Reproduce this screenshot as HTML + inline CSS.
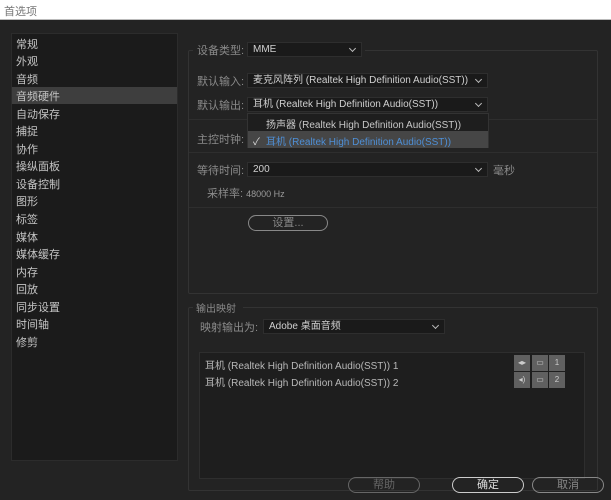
<!DOCTYPE html><html><head><meta charset="utf-8"><style>
*{margin:0;padding:0;box-sizing:border-box}
body{width:611px;height:500px;background:#232323;font-family:"Liberation Sans","Noto Sans CJK SC",sans-serif;font-size:10px;color:#a8a8a8;position:relative;overflow:hidden}
.a{position:absolute;white-space:nowrap}
.title{left:0;top:0;width:611px;height:20px;background:#fff;color:#777;font-size:11px;padding:3px 4px;border-bottom:1px solid #bbb}
.list{left:11px;top:33px;width:167px;height:428px;background:#1b1b1b;border:1px solid #2c2c2c}
.li{position:absolute;left:4px;font-size:11px;color:#c4c4c4}
.sel{position:absolute;left:0;width:165px;height:17px;background:#3e3e3e}
.dd{position:absolute;background:#1a1a1a;border:1px solid #2e2e2e;height:15px;color:#d0d0d0;padding:0 5px;line-height:13px;font-size:10px}
.dd:after{content:"";position:absolute;right:6px;top:3px;width:4px;height:4px;border-right:1px solid #bbb;border-bottom:1px solid #bbb;transform:rotate(45deg)}
.lbl{font-size:11px;color:#8a8a8a}
.box{border:1px solid #333;border-radius:2px}
.btn{position:absolute;height:16px;border:1px solid #666;border-radius:8px;color:#666;text-align:center;font-size:11px;line-height:14px}
.ic{position:absolute;width:16px;height:16px;background:#606060;color:#ccc;font-size:8px;text-align:center;line-height:16px}
</style></head><body>
<div class="a title">首选项</div>
<div class="a list">
<div class="sel" style="top:53px"></div>
<div class="li" style="top:2px">常规</div><div class="li" style="top:19px">外观</div><div class="li" style="top:37px">音频</div><div class="li" style="top:54px">音频硬件</div><div class="li" style="top:72px">自动保存</div><div class="li" style="top:89px">捕捉</div><div class="li" style="top:107px">协作</div><div class="li" style="top:124px">操纵面板</div><div class="li" style="top:142px">设备控制</div><div class="li" style="top:159px">图形</div><div class="li" style="top:177px">标签</div><div class="li" style="top:195px">媒体</div><div class="li" style="top:212px">媒体缓存</div><div class="li" style="top:230px">内存</div><div class="li" style="top:247px">回放</div><div class="li" style="top:265px">同步设置</div><div class="li" style="top:282px">时间轴</div><div class="li" style="top:300px">修剪</div>
</div>
<div class="a box" style="left:188px;top:50px;width:410px;height:244px"></div>
<div class="a" style="left:193px;top:42px;width:172px;height:16px;background:#232323"></div>
<div class="a" style="left:189px;top:119px;width:408px;height:1px;background:#2e2e2e"></div>
<div class="a" style="left:189px;top:152px;width:408px;height:1px;background:#2e2e2e"></div>
<div class="a" style="left:189px;top:207px;width:408px;height:1px;background:#2e2e2e"></div>
<div class="a lbl" style="left:197px;top:42px">设备类型:</div>
<div class="dd" style="left:247px;top:42px;width:115px">MME</div>
<div class="a lbl" style="left:197px;top:73px">默认输入:</div>
<div class="dd" style="left:247px;top:73px;width:241px">麦克风阵列 (Realtek High Definition Audio(SST))</div>
<div class="a lbl" style="left:197px;top:97px">默认输出:</div>
<div class="dd" style="left:247px;top:97px;width:241px">耳机 (Realtek High Definition Audio(SST))</div>
<div class="a lbl" style="left:197px;top:131px">主控时钟:</div>
<div class="a" style="left:247px;top:113px;width:242px;height:35px;background:#1e1e1e;border:1px solid #333">
<div class="a" style="left:18px;top:2px;color:#c8c8c8">扬声器 (Realtek High Definition Audio(SST))</div>
<div class="a" style="left:0;top:17px;width:240px;height:17px;background:#464646"></div>
<div class="a" style="left:5px;top:19px;color:#ddd">✓</div>
<div class="a" style="left:18px;top:19px;color:#4e8fd6">耳机 (Realtek High Definition Audio(SST))</div>
</div>
<div class="a lbl" style="left:197px;top:162px">等待时间:</div>
<div class="dd" style="left:247px;top:162px;width:241px">200</div>
<div class="a lbl" style="left:493px;top:162px">毫秒</div>
<div class="a lbl" style="left:207px;top:185px">采样率: <span style="font-size:9px;color:#999">48000 Hz</span></div>
<div class="btn" style="left:248px;top:215px;width:80px;color:#888;border-color:#888">设置...</div>
<div class="a box" style="left:188px;top:307px;width:410px;height:184px"></div>
<div class="a" style="left:193px;top:300px;width:50px;height:14px;background:#232323"></div>
<div class="a lbl" style="left:196px;top:300px;font-size:10px">输出映射</div>
<div class="a lbl" style="left:200px;top:319px">映射输出为:</div>
<div class="dd" style="left:263px;top:319px;width:182px">Adobe 桌面音频</div>
<div class="a" style="left:199px;top:352px;width:386px;height:127px;background:#1e1e1e;border:1px solid #2e2e2e"></div>
<div class="a" style="left:205px;top:357px;color:#b8b8b8">耳机 (Realtek High Definition Audio(SST)) 1</div>
<div class="a" style="left:205px;top:374px;color:#b8b8b8">耳机 (Realtek High Definition Audio(SST)) 2</div>
<div class="ic" style="left:514px;top:355px">◂▸</div><div class="ic" style="left:532px;top:355px">▭</div><div class="ic" style="left:549px;top:355px">1</div>
<div class="ic" style="left:514px;top:372px">◂)</div><div class="ic" style="left:532px;top:372px">▭</div><div class="ic" style="left:549px;top:372px">2</div>
<div class="btn" style="left:348px;top:477px;width:72px">帮助</div>
<div class="btn" style="left:452px;top:477px;width:72px;border-color:#ccc;color:#ddd;background:#232323">确定</div>
<div class="btn" style="left:532px;top:477px;width:72px;color:#888;border-color:#888">取消</div>
</body></html>
